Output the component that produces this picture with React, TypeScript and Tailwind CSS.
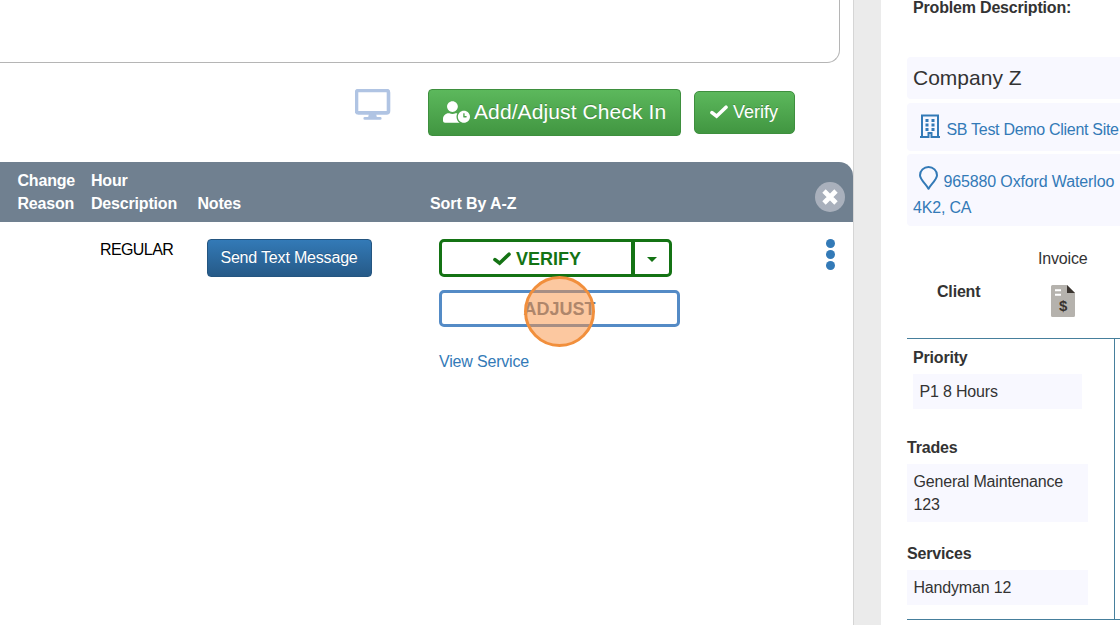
import type { ReactNode } from 'react';
import { FaUserClock } from 'react-icons/fa';

function CheckIcon({ className }: { className: string }) {
  return (
    <svg className={className} viewBox="0 0 18 14" fill="none" stroke="currentColor" strokeWidth={3.6}>
      <path strokeLinecap="round" strokeLinejoin="miter" d="M2 7.6L6.6 11.2L16 2.2" />
    </svg>
  );
}

function MonitorIcon() {
  return (
    <svg className="h-8 w-9 shrink-0" viewBox="0 0 36 32">
      <rect x="1.5" y="1.5" width="32" height="22.4" rx="2" fill="none" stroke="#b0c4e3" strokeWidth="3.6" />
      <path d="M14 24.5h7l.8 3.5h3.400a1.4 1.4 0 010 2.800H9.800a1.400 1.400 0 010-2.800h3.400z" fill="#b0c4e3" />
    </svg>
  );
}

function BuildingIcon() {
  return (
    <svg className="h-6 w-5 shrink-0" viewBox="0 0 20 24" fill="none" stroke="currentColor">
      <path strokeWidth="2" d="M2 22.500V1.500h16V22.500M0 22.900h8.500v-4h3v4H20" />
      <path
        strokeWidth="3"
        d="M5.500 6.500h3M11.500 6.500h3M5.500 11h3M11.500 11h3M5.500 15.500h3M11.500 15.500h3"
      />
    </svg>
  );
}

function PinIcon() {
  return (
    <svg className="h-6 w-[19px] shrink-0" viewBox="0 0 19 24" fill="none" stroke="currentColor" strokeWidth="2">
      <path strokeLinejoin="round" d="M9.500 22.800C8 19.200 1 13.600 1 9.200a8.500 8.200 0 0117 0c0 4.400-7 10-8.500 13.600z" />
    </svg>
  );
}

function InvoiceIcon() {
  return (
    <svg className="h-8 w-6" viewBox="0 0 24 32">
      <path d="M1.500 0H16l8 8v22.500a1.500 1.500 0 01-1.500 1.500h-21A1.500 1.500 0 010 30.500v-29A1.500 1.500 0 011.500 0z" fill="#b5b2ad" />
      <path d="M16 0l8 8h-8z" fill="#39332e" />
      <path d="M4 5.200h6M4 9.700h6" stroke="#fff" strokeWidth="1.900" />
      <text x="12" y="26" textAnchor="middle" fontSize="15" fontWeight="700" fill="#39332e">$</text>
    </svg>
  );
}

function Field({ children, className = '' }: { children: ReactNode; className?: string }) {
  return <div className={`bg-[#f8f8ff] pl-[6.500px] leading-[23px] ${className}`}>{children}</div>;
}

function TopActions() {
  return (
    <div className="flex h-[99px] items-start pl-[355px] pt-[26px]">
      <MonitorIcon />
      <button className="ml-[37px] flex h-[47px] w-[253px] items-center rounded border border-[#3e8f3e] bg-linear-to-b from-[#5cb85c] to-[#419641] pb-[2px] pl-[14px] text-[21px] text-white [text-shadow:0_-1px_0_rgba(0,0,0,.2)]">
        <FaUserClock className="h-[22px] w-[27px]" />
        <span className="ml-1 whitespace-nowrap tracking-[0.1px]">Add/Adjust Check In</span>
      </button>
      <button className="ml-[13px] mt-[2px] flex h-[43px] w-[101px] items-center rounded-[5px] border border-[#3e8f3e] bg-linear-to-b from-[#5cb85c] to-[#419641] pb-px pl-[15px] text-lg tracking-normal text-white [text-shadow:0_-1px_0_rgba(0,0,0,.2)]">
        <CheckIcon className="h-[14px] w-[18px]" />
        <span className="ml-[5px]">Verify</span>
      </button>
    </div>
  );
}

function TimeTable() {
  return (
    <div>
      <div className="flex h-[60px] items-end rounded-tr-[14px] bg-[#708090] pb-[7px] pl-[17.500px] font-bold leading-[23px] text-white">
        <div className="w-[73.500px]">Change<br />Reason</div>
        <div className="w-[106.500px]">Hour<br />Description</div>
        <div className="w-[232.500px]">Notes</div>
        <div className="tracking-[-0.080px]">Sort By A-Z</div>
        <button className="mb-[3px] ml-auto mr-2 flex size-[30px] items-center justify-center rounded-full bg-[#a9b0bc]">
          <svg className="size-4" viewBox="0 0 16 16" stroke="white" strokeWidth="4.800">
            <path d="M2 2l12 12M14 2L2 14" />
          </svg>
        </button>
      </div>

      <div className="flex items-start pt-[17px]">
        <div className="w-[207px] pl-[100px] leading-[22px] tracking-[-0.600px] text-black">REGULAR</div>
        <button className="h-[38px] w-[165px] rounded border border-[#245580] bg-linear-to-b from-[#337ab7] to-[#265a88] pr-px text-white [text-shadow:0_-1px_0_rgba(0,0,0,.2)]">
          Send Text Message
        </button>

        <div className="ml-[67px] w-[241px]">
          <div className="flex h-[38px] w-[233px] rounded-[5px] border-[3px] border-[#147314] text-[#147314]">
            <button className="flex flex-1 items-center justify-center pl-px pt-[2px] text-[18px] font-bold tracking-normal">
              <CheckIcon className="h-[14px] w-[18px]" />
              <span className="ml-[5px]">VERIFY</span>
            </button>
            <button className="flex w-[38px] items-center justify-center border-l-4 border-[#147314] pt-[3px]">
              <span className="border-x-[5px] border-t-[5px] border-x-transparent border-t-[#147314]" />
            </button>
          </div>
          <div className="relative mt-[13px]">
            <button className="block h-[37px] w-[241px] rounded-[5px] border-[3px] border-[#548bc6] pt-[2px] text-[18px] font-bold tracking-normal text-[#647a95]">
              ADJUST
            </button>
            <span className="absolute left-[85px] top-[-14px] size-[71px] rounded-full border-[3px] border-[#f18f3c] bg-[#f9924180]" />
          </div>
          <a className="mt-[23px] block leading-6 text-[#337ab7]">View Service</a>
        </div>

        <div className="ml-[146px] flex flex-col gap-[2px]">
          <span className="size-[9px] rounded-full bg-[#337ab7]" />
          <span className="size-[9px] rounded-full bg-[#337ab7]" />
          <span className="size-[9px] rounded-full bg-[#337ab7]" />
        </div>
      </div>
    </div>
  );
}

function DetailsPanel() {
  return (
    <aside className="flex-1 overflow-hidden whitespace-nowrap bg-white pl-[26px]">
      <div className="h-[57px] pl-1.5 font-bold leading-[15px]">Problem Description:</div>

      <div className="h-[42px] rounded-l bg-[#f8f8ff] pl-1.5 text-[21px] leading-[42px] tracking-normal">Company Z</div>
      <a className="mt-1 flex h-12 items-start rounded-l bg-[#f8f8ff] pl-[13px] pt-[11px] text-[#337ab7]">
        <BuildingIcon />
        <span className="ml-[6.500px] pt-1 leading-[23px] tracking-[-0.300px]">SB Test Demo Client Site</span>
      </a>
      <a className="mt-[3px] block h-[72px] rounded-l bg-[#f8f8ff] pl-1.5 pt-3 text-[#337ab7]">
        <span className="flex h-[30px] items-start pl-1.5">
          <PinIcon />
          <span className="ml-[5.500px] pt-1 leading-[23px] tracking-[-0.140px]">965880 Oxford Waterloo</span>
        </span>
        <span className="block leading-6">4K2, CA</span>
      </a>

      <div className="flex h-28 pt-[21px]">
        <div className="w-[131px] pl-[30px] pt-[33px] font-bold leading-[23px]">Client</div>
        <div>
          <div className="leading-6">Invoice</div>
          <div className="mt-[14px] pl-[13px]"><InvoiceIcon /></div>
        </div>
      </div>

      <div className="h-[282px] border-y border-[#467f9c]">
        <div className="h-full w-[208px] border-r border-[#467f9c] pt-[7px]">
          <div className="pl-1.5 font-bold leading-[23px]">Priority</div>
          <Field className="ml-1.5 mt-[5px] h-[35px] w-[169px] pt-1.5">P1 8 Hours</Field>
          <div className="mt-[27px] font-bold leading-[23px]">Trades</div>
          <Field className="mt-[5px] h-[58px] w-[181px] pt-1.5">General Maintenance<br />123</Field>
          <div className="mt-[20px] font-bold leading-[23px]">Services</div>
          <Field className="mt-[5px] h-[35px] w-[181px] pt-1.5">Handyman 12</Field>
        </div>
      </div>
    </aside>
  );
}

export default function App() {
  return (
    <div className="flex h-[625px] w-[1120px] overflow-hidden bg-[#ebebeb] font-['Liberation_Sans',Arial,sans-serif] text-[16px] tracking-[-0.180px] text-[#333]">
      <main className="w-[854px] border-r border-[#d5d5d5] bg-white">
        <div className="h-[63px] w-[840px] rounded-br-[13px] border-b border-r border-[#b5b5b5]" />
        <TopActions />
        <TimeTable />
      </main>
      <div className="w-[27px]" />
      <DetailsPanel />
    </div>
  );
}
